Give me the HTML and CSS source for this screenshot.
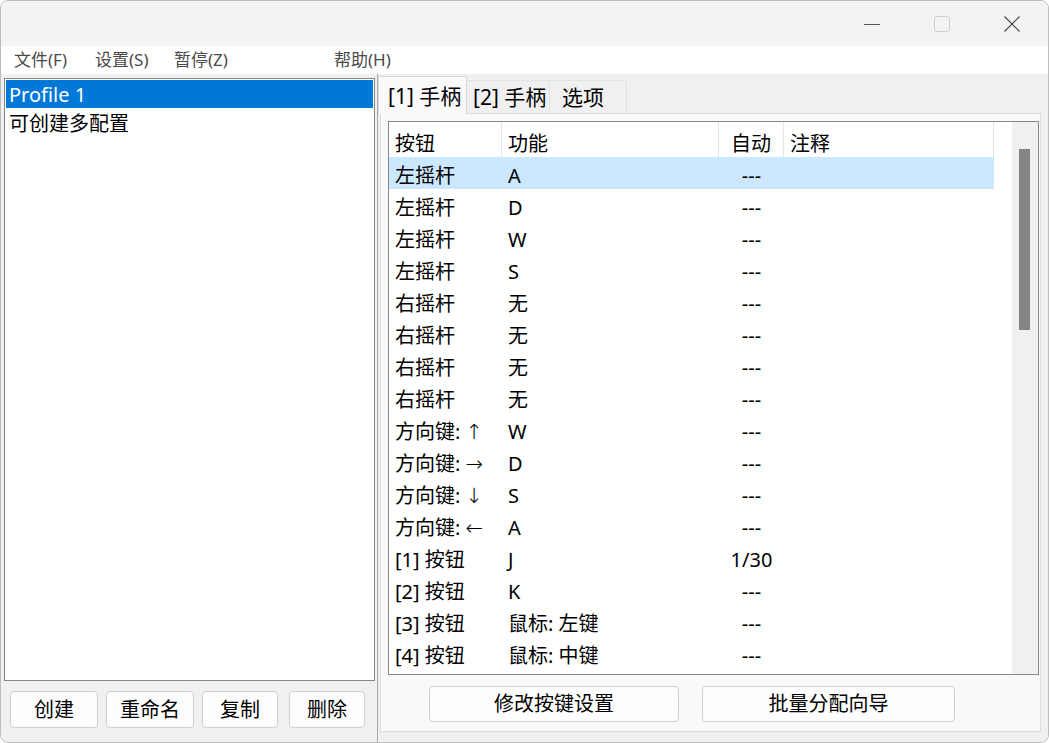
FILE: index.html
```html
<!DOCTYPE html>
<html lang="zh">
<head>
    <meta charset="UTF-8">
    <title>按键映射</title>
    <link rel="stylesheet" href="styles.css">
</head>
<body>
<div class="window">
    <div class="titlebar">
        <div class="caption-btn">
            <svg width="16" height="16" viewBox="0 0 16 16"><line x1="0" y1="8.5" x2="16" y2="8.5" stroke="#555" stroke-width="1"/></svg>
        </div>
        <div class="caption-btn">
            <svg width="16" height="16" viewBox="0 0 16 16"><rect x="0.5" y="0.5" width="15" height="15" rx="2" fill="none" stroke="#cfcfcf" stroke-width="1"/></svg>
        </div>
        <div class="caption-btn">
            <svg width="16" height="16" viewBox="0 0 16 16"><path d="M0.5 0.5 L15.5 15.5 M15.5 0.5 L0.5 15.5" stroke="#444" stroke-width="1.1" fill="none"/></svg>
        </div>
    </div>

    <div class="menubar">
        <span class="menu-item m1">文件(F)</span>
        <span class="menu-item m2">设置(S)</span>
        <span class="menu-item m3">暂停(Z)</span>
        <span class="menu-item">帮助(H)</span>
    </div>

    <div class="main">
        <div class="left">
            <div class="profile-list">
                <div class="profile selected">Profile 1</div>
                <div class="profile">可创建多配置</div>
            </div>
            <div class="left-buttons">
                <button class="btn wide">创建</button>
                <button class="btn wide">重命名</button>
                <button class="btn">复制</button>
                <button class="btn last">删除</button>
            </div>
        </div>

        <div class="splitter"></div>

        <div class="right">
            <div class="tabs">
                <div class="tab active">[1] 手柄</div>
                <div class="tab t2">[2] 手柄</div>
                <div class="tab t3">选项</div>
            </div>
            <div class="tab-panel">
                <div class="listview">
                    <div class="lv-body">
                        <div class="lv-row lv-header">
                            <div class="cell">按钮</div>
                            <div class="cell">功能</div>
                            <div class="cell center">自动</div>
                            <div class="cell">注释</div>
                        </div>
                        <div id="rows"></div>
                    </div>
                    <div class="scrollbar"><div class="thumb"></div></div>
                </div>
                <div class="panel-buttons">
                    <button class="btn big">修改按键设置</button>
                    <button class="btn big b2">批量分配向导</button>
                </div>
            </div>
        </div>
    </div>
</div>

<script>
    // key map rows
    const arrow = a => `方向键: <span class="arrow">${a}</span>`;
    const rows = [
        ['左摇杆', 'A', '---'],
        ['左摇杆', 'D', '---'],
        ['左摇杆', 'W', '---'],
        ['左摇杆', 'S', '---'],
        ['右摇杆', '无', '---'],
        ['右摇杆', '无', '---'],
        ['右摇杆', '无', '---'],
        ['右摇杆', '无', '---'],
        [arrow('↑'), 'W', '---'],
        [arrow('→'), 'D', '---'],
        [arrow('↓'), 'S', '---'],
        [arrow('←'), 'A', '---'],
        ['[1] 按钮', 'J', '1/30'],
        ['[2] 按钮', 'K', '---'],
        ['[3] 按钮', '鼠标: 左键', '---'],
        ['[4] 按钮', '鼠标: 中键', '---']
    ];
    const container = document.getElementById('rows');
    rows.forEach((r, i) => {
        const row = document.createElement('div');
        row.className = 'lv-row' + (i === 0 ? ' selected' : '');
        row.innerHTML = `
            <div class="cell">${r[0]}</div>
            <div class="cell">${r[1]}</div>
            <div class="cell center">${r[2]}</div>
            <div class="cell"></div>
        `;
        container.appendChild(row);
    });
</script>
</body>
</html>
```

FILE: styles.css
```css
html, body {
    margin: 0;
    padding: 0;
    background-color: #fff;
}
body {
    font-family: "Noto Sans", "Noto Sans CJK SC", sans-serif;
    color: #000;
}
.window {
    width: 1049px;
    height: 743px;
    box-sizing: border-box;
    border: 1px solid #bdbdbd;
    border-radius: 8px;
    overflow: hidden;
    display: flex;
    flex-direction: column;
    background-color: #f0f0f0;
}

/* title bar */
.titlebar {
    height: 45px;
    background-color: #f3f3f3;
    display: flex;
    justify-content: flex-end;
    align-items: flex-start;
    padding-right: 14px;
}
.caption-btn {
    width: 45px;
    margin-left: 25px;
    padding-top: 15px;
    display: flex;
    justify-content: center;
}
.caption-btn svg {
    display: block;
}

/* menu */
.menubar {
    height: 28px;
    background-color: #fff;
    display: flex;
    align-items: center;
    padding-left: 13px;
    font-size: 17px;
    color: #4a4a4a;
}
.menu-item {
    line-height: 30px;
    white-space: nowrap;
}
.menu-item.m1 {
    width: 81px;
}
.menu-item.m2 {
    width: 79px;
}
.menu-item.m3 {
    width: 160px;
}

/* main area */
.main {
    flex: 1;
    display: flex;
    background-color: #f0f0f0;
}
.left {
    width: 374px;
    padding: 4px 0 0 3px;
    box-sizing: border-box;
}
.profile-list {
    width: 371px;
    height: 603px;
    box-sizing: border-box;
    border: 1px solid #828790;
    background-color: #fff;
    padding: 1px 1px 0 1px;
}
.profile {
    height: 29px;
    line-height: 30px;
    font-size: 20px;
    padding-left: 3px;
}
.profile.selected {
    background-color: #0078d7;
    color: #fff;
    height: 28px;
    margin-bottom: 1px;
}
.left-buttons {
    display: flex;
    padding-left: 6px;
    margin-top: 10px;
}
.btn {
    height: 37px;
    box-sizing: border-box;
    border: 1px solid #d0d0d0;
    border-radius: 4px;
    background-color: #fdfdfd;
    font-family: "Noto Sans", "Noto Sans CJK SC", sans-serif;
    font-size: 20px;
    color: #000;
    padding: 0;
    line-height: 33px;
}
.left-buttons .btn {
    width: 76px;
    margin-right: 8px;
}
.left-buttons .btn.wide {
    width: 88px;
}
.left-buttons .btn.last {
    margin-left: 3px;
}
.splitter {
    width: 3px;
    border-right: 1px solid #a8a8a8;
    box-sizing: border-box;
}

/* right side */
.right {
    flex: 1;
    padding: 2px 7px 0 0;
    display: flex;
    flex-direction: column;
}
.tabs {
    display: flex;
    height: 37px;
    position: relative;
    z-index: 1;
}
.tab {
    box-sizing: border-box;
    height: 33px;
    margin-top: 4px;
    font-size: 21px;
    line-height: 33px;
    white-space: nowrap;
    background-color: #f0f0f0;
    border-top: 1px solid #e3e3e3;
    border-right: 1px solid #e3e3e3;
}
.tab.active {
    width: 89px;
    height: 38px;
    margin-top: 0;
    line-height: 38px;
    padding-left: 9px;
    background-color: #f9f9f9;
    border: 1px solid #d9d9d9;
    border-bottom: none;
}
.tab.t2 {
    width: 83px;
    padding-left: 6px;
}
.tab.t3 {
    width: 77px;
    padding-left: 12px;
}
.tab-panel {
    margin-left: 2px;
    height: 619px;
    box-sizing: border-box;
    border: 1px solid #dcdcdc;
    background-color: #f9f9f9;
    padding: 7px 1px 0 7px;
}

/* list view */
.listview {
    height: 554px;
    box-sizing: border-box;
    border: 1px solid #828790;
    background-color: #fff;
    display: flex;
}
.lv-body {
    flex: 1;
}
.lv-row {
    display: grid;
    grid-template-columns: 113px 217px 65px 210px;
    height: 32px;
    font-size: 20px;
    line-height: 32px;
}
.lv-header {
    height: 35px;
}
.lv-header .cell {
    border-right: 1px solid #e5e5e5;
    line-height: 37px;
}
.lv-row.selected {
    width: 605px;
    background-color: #cce8ff;
}
.cell {
    padding-left: 6px;
    padding-top: 3px;
    white-space: nowrap;
    overflow: hidden;
}
.cell.center {
    padding-left: 0;
    text-align: center;
}
.arrow {
    font-family: "DejaVu Sans", sans-serif;
    font-size: 21px;
    font-weight: 300;
}
.scrollbar {
    width: 26px;
    background-color: #f0f0f0;
    padding: 27px 0 0 7px;
    box-sizing: border-box;
}
.thumb {
    width: 11px;
    height: 181px;
    background-color: #858585;
}
.panel-buttons {
    display: flex;
    margin-top: 11px;
    padding-left: 41px;
}
.panel-buttons .btn.big {
    width: 250px;
    height: 36px;
    line-height: 32px;
}
.panel-buttons .btn.b2 {
    width: 253px;
    margin-left: 23px;
}
```
